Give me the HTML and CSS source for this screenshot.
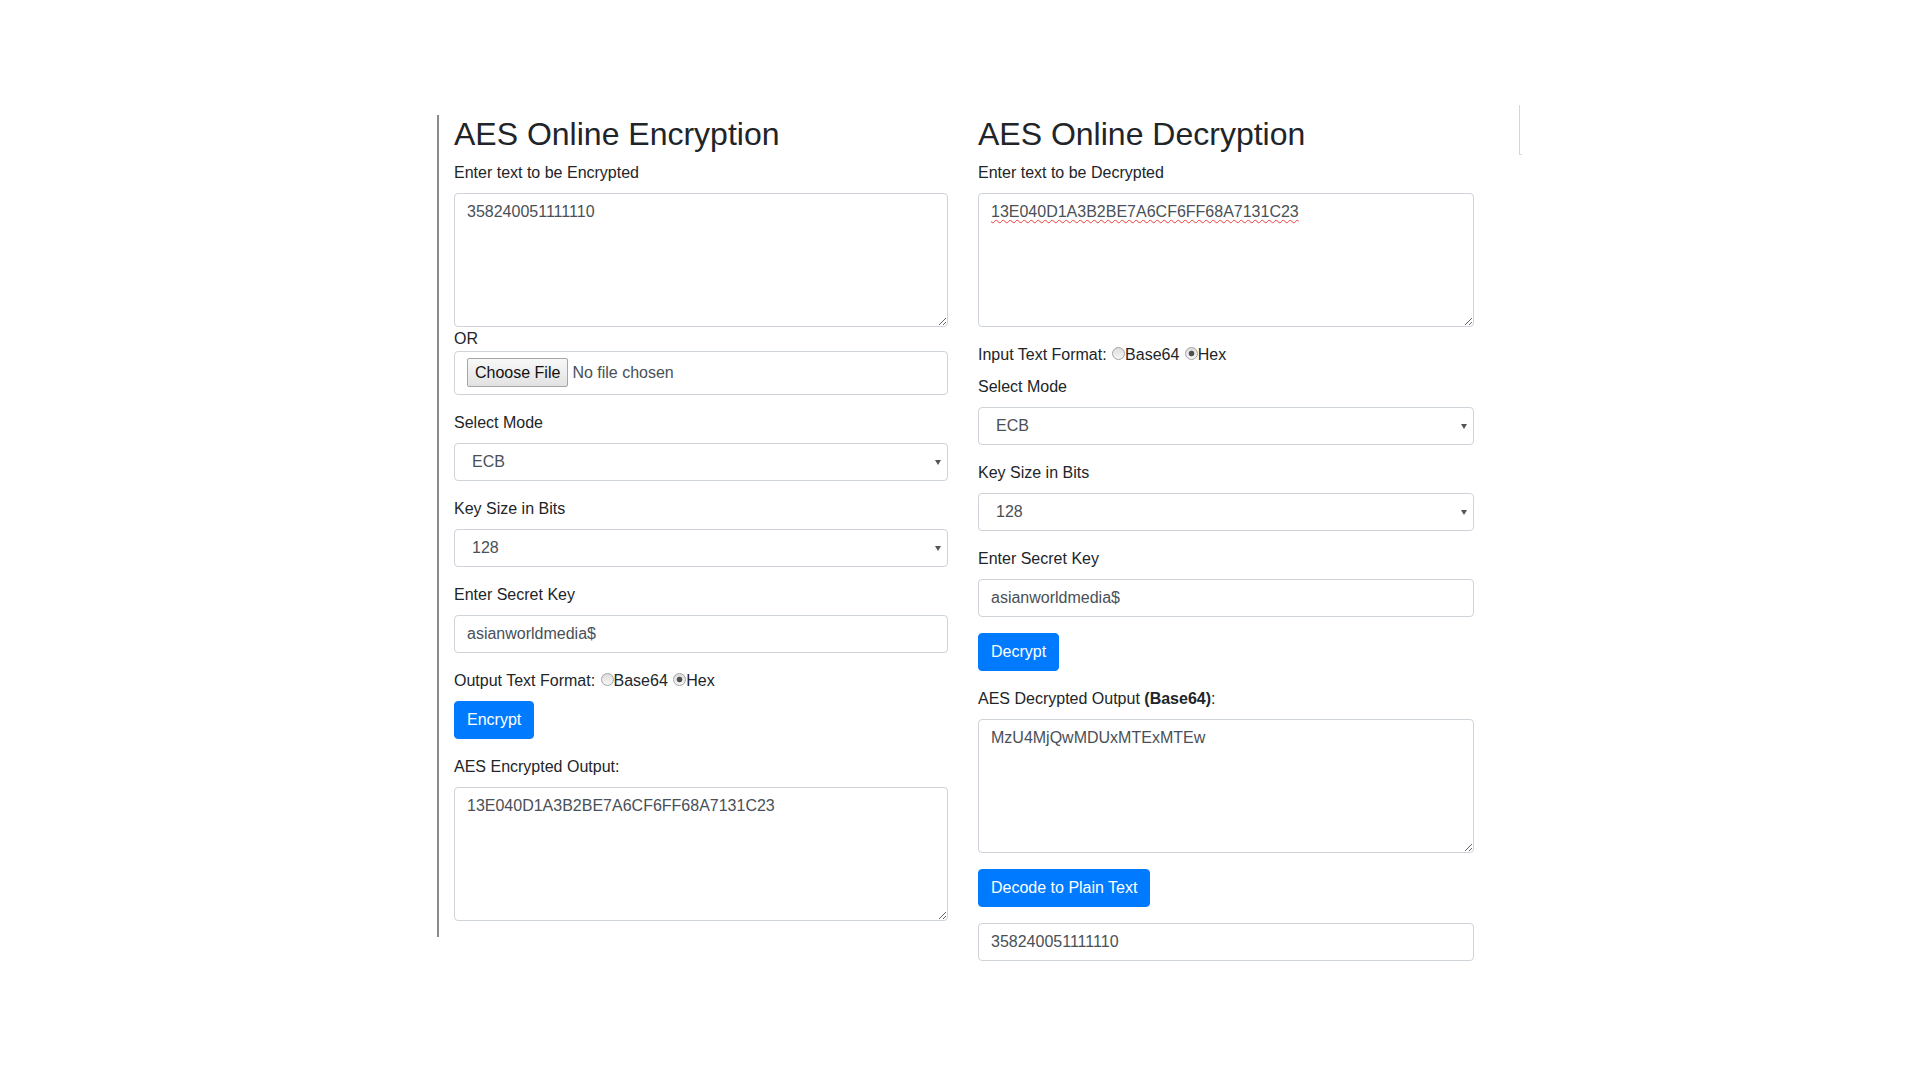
FILE: index.html
```html
<!DOCTYPE html>
<html lang="en">
<head>
<meta charset="utf-8">
<title>AES Online Encryption and Decryption</title>
<link rel="stylesheet" href="styles.css">
</head>
<body>
<div class="page">
  <section class="col col-enc">
    <h2 class="title">AES Online Encryption</h2>
    <div class="form-group">
      <label class="lbl">Enter text to be Encrypted</label>
      <textarea class="form-control ta" rows="5" spellcheck="false">358240051111110</textarea>
      <div class="or">OR</div>
      <input class="form-control file" type="file">
    </div>
    <div class="form-group">
      <label class="lbl">Select Mode</label>
      <div class="select-wrap">
        <select class="form-control sel"><option>ECB</option><option>CBC</option></select>
      </div>
    </div>
    <div class="form-group">
      <label class="lbl">Key Size in Bits</label>
      <div class="select-wrap">
        <select class="form-control sel"><option>128</option><option>192</option><option>256</option></select>
      </div>
    </div>
    <div class="form-group">
      <label class="lbl">Enter Secret Key</label>
      <input class="form-control" type="text" value="asianworldmedia$" spellcheck="false">
    </div>
    <div class="format">Output Text Format: <input class="radio" type="radio" name="outfmt">Base64 <input class="radio" type="radio" name="outfmt" checked>Hex</div>
    <div class="form-group">
      <button class="btn">Encrypt</button>
    </div>
    <div class="form-group">
      <label class="lbl">AES Encrypted Output:</label>
      <textarea class="form-control ta" rows="5" spellcheck="false">13E040D1A3B2BE7A6CF6FF68A7131C23</textarea>
    </div>
  </section>

  <section class="col col-dec">
    <h2 class="title">AES Online Decryption</h2>
    <div class="form-group">
      <label class="lbl">Enter text to be Decrypted</label>
      <textarea class="form-control ta misspelled" rows="5" spellcheck="false">13E040D1A3B2BE7A6CF6FF68A7131C23</textarea>
    </div>
    <div class="format">Input Text Format: <input class="radio" type="radio" name="infmt">Base64 <input class="radio" type="radio" name="infmt" checked>Hex</div>
    <div class="form-group">
      <label class="lbl">Select Mode</label>
      <div class="select-wrap">
        <select class="form-control sel"><option>ECB</option><option>CBC</option></select>
      </div>
    </div>
    <div class="form-group">
      <label class="lbl">Key Size in Bits</label>
      <div class="select-wrap">
        <select class="form-control sel"><option>128</option><option>192</option><option>256</option></select>
      </div>
    </div>
    <div class="form-group">
      <label class="lbl">Enter Secret Key</label>
      <input class="form-control" type="text" value="asianworldmedia$" spellcheck="false">
    </div>
    <div class="form-group">
      <button class="btn">Decrypt</button>
    </div>
    <div class="form-group">
      <label class="lbl">AES Decrypted Output <b>(Base64)</b>:</label>
      <textarea class="form-control ta" rows="5" spellcheck="false">MzU4MjQwMDUxMTExMTEw</textarea>
    </div>
    <div class="form-group">
      <button class="btn">Decode to Plain Text</button>
    </div>
    <input class="form-control" type="text" value="358240051111110" spellcheck="false">
  </section>

  <aside class="edge"></aside>
</div>
</body>
</html>
```

FILE: styles.css
```css
html, body {
  margin: 0;
  padding: 0;
  background: #fff;
}

body {
  font-family: "Liberation Sans", Arial, sans-serif;
  font-size: 16px;
  line-height: 1.5;
  color: #212529;
}

.page {
  display: flex;
  align-items: flex-start;
  padding-top: 105px;
  padding-left: 437px;
}

.col {
  width: 494px;
  padding: 0 15px;
  margin-top: 10px;
  display: flow-root;
}

.col-enc {
  border-left: 2px solid #8a8a8a;
}

.col-dec {
  width: 496px;
}

.edge {
  width: 2px;
  height: 49px;
  margin-left: 30px;
  border-left: 1px solid #d6d6d6;
  border-bottom: 1px solid #d6d6d6;
}

.title {
  margin: 0 0 8px;
  font-size: 32px;
  font-weight: 500;
  line-height: 1.2;
  color: #212529;
}

.form-group {
  margin-bottom: 16px;
}

.lbl {
  display: inline-block;
  margin-bottom: 8px;
}

.lbl b {
  font-weight: 700;
}

.form-control {
  display: block;
  width: 100%;
  box-sizing: border-box;
  height: 38px;
  padding: 6px 12px;
  margin: 0;
  font-family: inherit;
  font-size: 16px;
  line-height: 1.5;
  color: #495057;
  background: #fff;
  border: 1px solid #ced4da;
  border-radius: 4px;
  outline: none;
}

.ta {
  height: auto;
  resize: vertical;
  overflow: auto;
}

.misspelled {
  text-decoration: underline wavy #f03c3c;
  text-decoration-thickness: 1px;
  text-underline-offset: 2px;
  text-decoration-skip-ink: none;
}

.or {
  line-height: 24px;
}

.file {
  height: 44px;
  padding: 6px 12px;
}

.file::file-selector-button {
  height: 29px;
  margin: 0 4px 0 0;
  padding: 0 7px;
  font-family: "Liberation Sans", Arial, sans-serif;
  font-size: 16px;
  color: #111;
  background: linear-gradient(#f8f8f8, #e2e2e2);
  border: 1px solid #a6a6a6;
  border-radius: 2px;
}

.select-wrap {
  position: relative;
}

.select-wrap::after {
  content: "";
  position: absolute;
  right: 7px;
  top: 17px;
  border-left: 3.5px solid transparent;
  border-right: 3.5px solid transparent;
  border-top: 5px solid #555;
  pointer-events: none;
}

.sel {
  appearance: none;
  -webkit-appearance: none;
  padding-left: 17px;
}

.format {
  margin-bottom: 8px;
  line-height: 24px;
}

.radio {
  appearance: none;
  -webkit-appearance: none;
  display: inline-block;
  box-sizing: border-box;
  width: 13px;
  height: 13px;
  margin: 0 0 0 1px;
  vertical-align: 0px;
  border: 1px solid #a3a3a3;
  border-radius: 50%;
  background: linear-gradient(#dcdcdc, #f7f7f7);
}

.radio:checked {
  background: radial-gradient(circle, #505050 0 2.5px, transparent 3.2px), linear-gradient(#dcdcdc, #f7f7f7);
}

.btn {
  display: inline-block;
  padding: 6px 12px;
  font-family: inherit;
  font-size: 16px;
  line-height: 1.5;
  font-weight: 400;
  color: #fff;
  background: #007bff;
  border: 1px solid #007bff;
  border-radius: 4px;
  cursor: pointer;
}
```
